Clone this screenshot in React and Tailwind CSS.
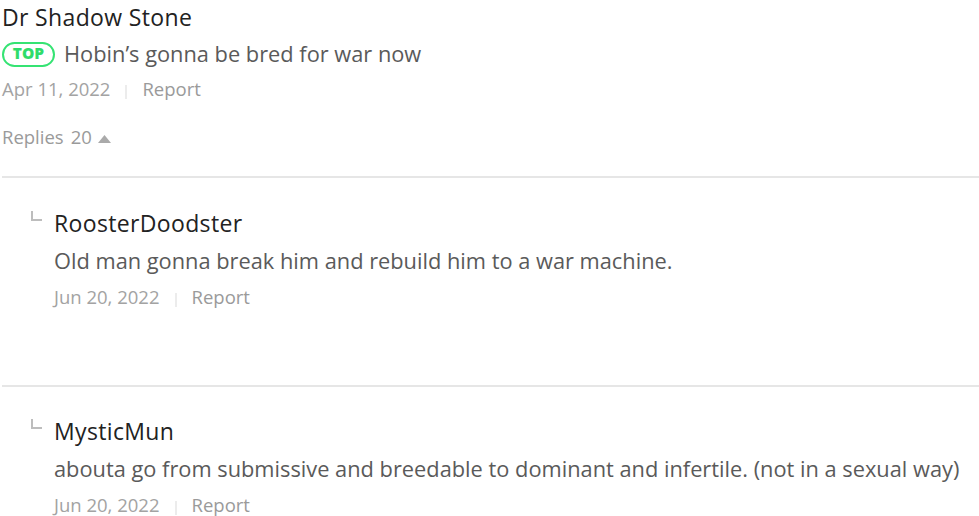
import React from "react";

const font = { fontFamily: '"Open Sans", "Noto Sans", sans-serif' };

function Meta({ date }) {
  return (
    <div className="flex items-center text-[18.5px] leading-[22px] text-[#a3a3a3]">
      <span>{date}</span>
      <span className="mx-[15px] mt-[6px] h-[14px] w-[2px] bg-[#ececec]" />
      <span className="text-[#9a9a9a]">Report</span>
    </div>
  );
}

function Reply({ name, text, date, first }) {
  return (
    <div className="flex flex-col">
      <div className="h-[2px] w-full bg-[#e6e6e6]" />
      <div className={`flex pl-[29px] ${first ? "pt-[30px]" : "pt-[29px]"}`}>
        <div className="mt-[3px] flex h-[10px] w-[23px] flex-none">
          <div className="h-[10px] w-[2px] bg-[#bdbdbd]" />
          <div className="mt-[8px] h-[2px] w-[9px] bg-[#bdbdbd]" />
        </div>
        <div className="flex flex-col">
          <div className="text-[23px] leading-[30px] tracking-[0.35px] text-[#222]">{name}</div>
          <div className="mt-[8px] text-[21.8px] leading-[30px] text-[#5a5a5a]">{text}</div>
          <div className="mt-[10px]">
            <Meta date={date} />
          </div>
        </div>
      </div>
      <div className="h-[77px]" />
    </div>
  );
}

export default function App() {
  return (
    <div className="h-[516px] w-[979px] overflow-hidden bg-white" style={font}>
      <div className="flex flex-col pl-[2px]">
        <div className="pt-[2px] text-[23px] leading-[30px] tracking-[0.35px] text-[#222]">Dr Shadow Stone</div>
        <div className="mt-[7px] flex items-center">
          <span className="flex h-[25px] w-[53px] items-center justify-center rounded-full border-2 border-[#35e373] text-[15.5px] font-extrabold leading-none text-[#2fdc6a]">
            TOP
          </span>
          <span className="ml-[9px] text-[21.8px] leading-[30px] text-[#5a5a5a]">
            Hobin’s gonna be bred for war now
          </span>
        </div>
        <div className="mt-[9px]">
          <Meta date="Apr 11, 2022" />
        </div>
        <div className="mt-[25px] flex items-center text-[18.5px] leading-[24px] text-[#9a9a9a]">
          <span>Replies</span>
          <span className="ml-[7px]">20</span>
          <svg className="ml-[6px] mt-[4px]" width="13" height="8" viewBox="0 0 13 8">
            <polygon points="6.5,0 13,8 0,8" fill="#aaaaaa" />
          </svg>
        </div>
        <div className="h-[27px]" />
        <Reply
          first
          name="RoosterDoodster"
          text="Old man gonna break him and rebuild him to a war machine."
          date="Jun 20, 2022"
        />
        <Reply
          name="MysticMun"
          text="abouta go from submissive and breedable to dominant and infertile. (not in a sexual way)"
          date="Jun 20, 2022"
        />
      </div>
    </div>
  );
}
